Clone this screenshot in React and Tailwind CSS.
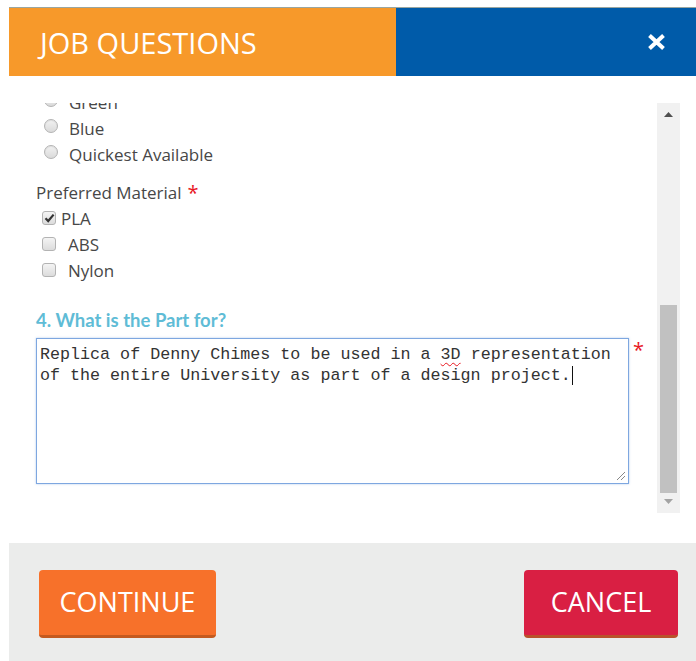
import React from 'react';

function Radio({ label }) {
  return (
    <div className="flex h-[26px] items-center pl-[35px]">
      <span className="-mt-[1px] h-[14px] w-[14px] rounded-full border border-[#b3b3b3] bg-gradient-to-b from-[#f2f2f2] to-[#dadada] shadow-[inset_0_1px_1px_rgba(0,0,0,0.08)]" />
      <span className="ml-[11px] mt-[5px]">{label}</span>
    </div>
  );
}

function Checkbox({ label, checked }) {
  return (
    <div className="flex h-[26px] items-center pl-[33px]">
      <span className="-mt-[2px] flex h-[14px] w-[14px] items-center justify-center rounded-[3px] border border-[#b3b3b3] bg-gradient-to-b from-[#f4f4f4] to-[#dcdcdc]">
        {checked && (
          <svg width="11" height="10" viewBox="0 0 11 10">
            <path d="M1.5 5.2 L4.2 8 L9.6 1.6" fill="none" stroke="#333" strokeWidth="2.2" />
          </svg>
        )}
      </span>
      <span className={checked ? 'ml-[5px]' : 'ml-[12px]'}>{label}</span>
    </div>
  );
}

export default function App() {
  return (
    <div className="min-h-screen bg-white pl-[9px] pt-[7px] font-['Open_Sans'] text-[17px] text-[#474747]">
      <div className="flex h-[654px] flex-col">
        <header className="flex h-[69px] border-t border-[#9aa6a0]">
          <div className="flex w-[387px] items-center bg-[#f7992a] pl-[31px] text-[29px] leading-none text-white">
            JOB QUESTIONS
          </div>
          <div className="flex flex-1 items-center justify-end bg-[#005ba9] pr-[30px]">
            <svg width="19" height="16" viewBox="0 0 19 16">
              <path d="M2.5 1.5 L16.5 14.5 M16.5 1.5 L2.5 14.5" stroke="#fff" strokeWidth="4" />
            </svg>
          </div>
        </header>

        <div className="flex flex-1 pb-[30px] pt-[27px] pr-[16px]">
          <div className="flex-1 overflow-hidden">
            <div className="-mt-[16px]">
              <Radio label="Green" />
              <Radio label="Blue" />
              <Radio label="Quickest Available" />

              <div className="mt-[15px] flex h-[26px] items-center pl-[27px]">
                Preferred Material
                <span className="ml-[6px] text-[20px] leading-none text-[#e8171f]">*</span>
              </div>
              <Checkbox label="PLA" checked />
              <Checkbox label="ABS" />
              <Checkbox label="Nylon" />

              <h3 className="mt-[26px] flex h-[22px] items-center pl-[27px] font-['Lato'] text-[18.5px] font-bold text-[#5fbcd6]">
                4. What is the Part for?
              </h3>

              <div className="mt-[6px] flex pl-[27px]">
                <div className="relative h-[146px] w-[593px] border border-[#7ea7e0] bg-white pl-[3px] pt-[5px] font-['Liberation_Mono'] text-[16.7px] leading-[21px] text-[#333] shadow-[0_0_2px_rgba(126,167,224,0.6)]">
                  <div>
                    Replica of Denny Chimes to be used in a{' '}
                    <span className="underline decoration-[#e8171f] decoration-wavy decoration-1 underline-offset-[3px]">3D</span>{' '}
                    representation
                  </div>
                  <div className="flex items-center">
                    of the entire University as part of a design project.
                    <span className="ml-[1px] h-[19px] w-px bg-[#111]" />
                  </div>
                  <svg className="absolute bottom-[2px] right-[2px]" width="10" height="10" viewBox="0 0 10 10">
                    <path d="M1 9 L9 1 M5 9 L9 5" stroke="#888" strokeWidth="1" />
                  </svg>
                </div>
                <span className="ml-[4px] mt-[2px] text-[20px] leading-none text-[#e8171f]">*</span>
              </div>
            </div>
          </div>

          <div className="flex w-[23px] flex-col items-center bg-[#f1f1f1] py-[9px]">
            <svg width="9" height="5" viewBox="0 0 9 5">
              <path d="M0 5 L4.5 0 L9 5 Z" fill="#505050" />
            </svg>
            <div className="flex-1" />
            <div className="h-[188px] w-[17px] bg-[#c1c1c1]" />
            <svg className="mt-[6px]" width="9" height="5" viewBox="0 0 9 5">
              <path d="M0 0 L9 0 L4.5 5 Z" fill="#a3a3a3" />
            </svg>
          </div>
        </div>

        <footer className="flex h-[118px] items-start justify-between bg-[#ebeceb] pl-[30px] pr-[18px] pt-[27px] text-[27px] text-white">
          <button className="flex h-[68px] w-[177px] items-center justify-center rounded-[4px] border-b-[3px] border-[#c45a1f] bg-[#f7712a]">
            CONTINUE
          </button>
          <button className="flex h-[68px] w-[154px] items-center justify-center rounded-[4px] border-b-[3px] border-[#b9522b] bg-[#d91f43]">
            CANCEL
          </button>
        </footer>
      </div>
    </div>
  );
}
